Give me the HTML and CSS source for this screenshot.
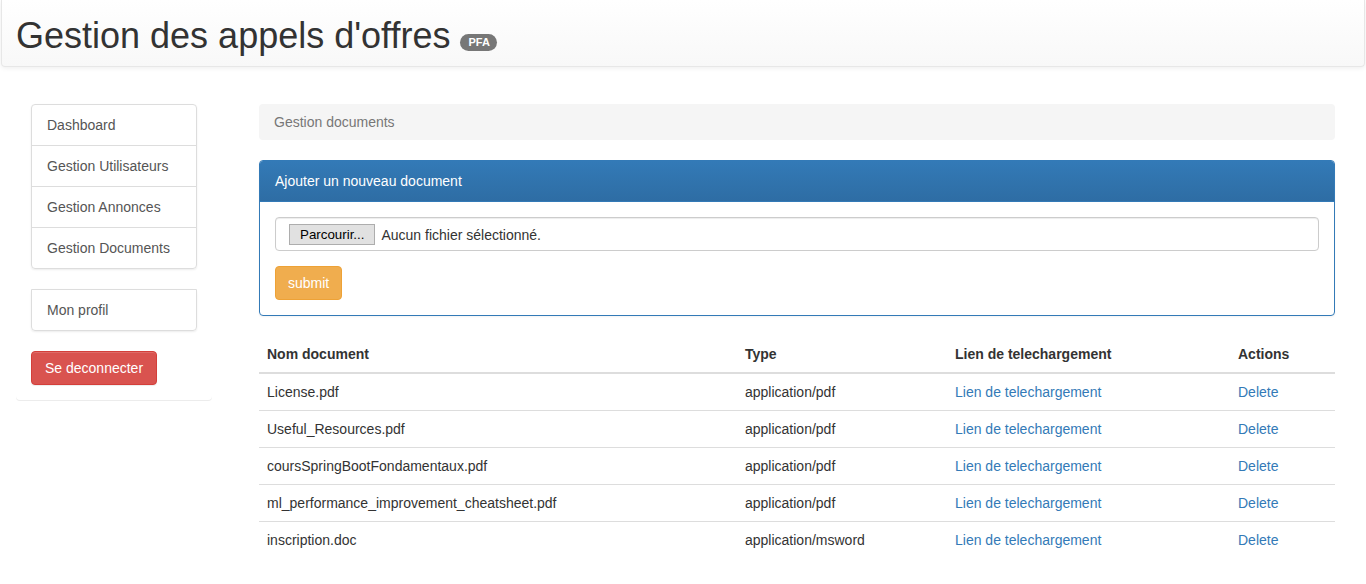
FILE: index.html
```html
<!DOCTYPE html>
<html lang="fr">
<head>
<meta charset="utf-8">
<title>Gestion des appels d'offres</title>
<link rel="stylesheet" href="styles.css">
</head>
<body>
<header class="topbar">
  <h1 class="title">Gestion des appels d'offres <span class="badge">PFA</span></h1>
</header>
<div class="layout">
  <aside class="sidebar">
    <ul class="list-group">
      <li class="list-item"><a href="#">Dashboard</a></li>
      <li class="list-item"><a href="#">Gestion Utilisateurs</a></li>
      <li class="list-item"><a href="#">Gestion Annonces</a></li>
      <li class="list-item"><a href="#">Gestion Documents</a></li>
    </ul>
    <ul class="list-group">
      <li class="list-item"><a href="#">Mon profil</a></li>
    </ul>
    <button class="btn btn-danger" type="button">Se deconnecter</button>
  </aside>
  <main class="main">
    <div class="breadcrumb">Gestion documents</div>
    <section class="panel">
      <div class="panel-heading">Ajouter un nouveau document</div>
      <div class="panel-body">
        <div class="file-control">
          <span class="file-btn">Parcourir...</span>
          <span class="file-name">Aucun fichier sélectionné.</span>
        </div>
        <button class="btn btn-warning" type="button">submit</button>
      </div>
    </section>
    <table class="table">
      <colgroup>
        <col class="c1"><col class="c2"><col class="c3"><col class="c4">
      </colgroup>
      <thead>
        <tr><th>Nom document</th><th>Type</th><th>Lien de telechargement</th><th>Actions</th></tr>
      </thead>
      <tbody>
        <tr><td>License.pdf</td><td>application/pdf</td><td><a href="#">Lien de telechargement</a></td><td><a href="#">Delete</a></td></tr>
        <tr><td>Useful_Resources.pdf</td><td>application/pdf</td><td><a href="#">Lien de telechargement</a></td><td><a href="#">Delete</a></td></tr>
        <tr><td>coursSpringBootFondamentaux.pdf</td><td>application/pdf</td><td><a href="#">Lien de telechargement</a></td><td><a href="#">Delete</a></td></tr>
        <tr><td>ml_performance_improvement_cheatsheet.pdf</td><td>application/pdf</td><td><a href="#">Lien de telechargement</a></td><td><a href="#">Delete</a></td></tr>
        <tr><td>inscription.doc</td><td>application/msword</td><td><a href="#">Lien de telechargement</a></td><td><a href="#">Delete</a></td></tr>
      </tbody>
    </table>
  </main>
</div>
</body>
</html>
```

FILE: styles.css
```css
* { box-sizing: border-box; }
html, body { margin: 0; padding: 0; }
body {
  font-family: "Liberation Sans", Arial, Helvetica, sans-serif;
  font-size: 14px;
  line-height: 20px;
  color: #333;
  background: #fff;
}
a { color: #337ab7; text-decoration: none; }

.topbar {
  height: 67px;
  margin: 0 1px;
  padding: 16px 14px 9px;
  border: 1px solid #e7e7e7;
  border-top: none;
  border-radius: 0 0 4px 4px;
  background: linear-gradient(to bottom, #fff 0, #f8f8f8 100%);
  box-shadow: 0 1px 5px rgba(0,0,0,.075);
}
.title {
  margin: 0;
  font-size: 36px;
  line-height: 40px;
  font-weight: 500;
  color: #333;
}
.badge {
  display: inline-block;
  vertical-align: baseline;
  padding: 3px 7px 3px 8px;
  font-size: 11px;
  line-height: 11px;
  font-weight: 700;
  color: #fff;
  background: #777;
  border-radius: 10px;
  position: relative;
  top: -2px;
}

.layout {
  display: flex;
  align-items: flex-start;
  gap: 47px;
  padding: 22px 31px 0 16px;
}
.sidebar {
  width: 196px;
  flex: none;
  padding: 15px;
  background: #fff;
  border-radius: 0 0 4px 4px;
  box-shadow: 0 1px 0 #ececec;
}
.list-group {
  list-style: none;
  margin: 0 0 20px;
  padding: 0;
  border-radius: 4px;
  box-shadow: 0 1px 2px rgba(0,0,0,.075);
}
.list-item {
  border: 1px solid #ddd;
  margin-bottom: -1px;
}
.list-item:first-child { border-radius: 4px 4px 0 0; }
.list-item:last-child { border-radius: 0 0 4px 4px; margin-bottom: 0; }
.list-item a {
  display: block;
  padding: 10px 15px;
  color: #555;
}

.btn {
  display: inline-block;
  font-family: inherit;
  font-size: 14px;
  line-height: 20px;
  padding: 6px 12px;
  border: 1px solid transparent;
  border-radius: 4px;
  color: #fff;
  cursor: pointer;
}
.btn-danger {
  padding: 6px 13px;
  background: #d9534f;
  border-color: #d43f3a;
  box-shadow: inset 0 1px 0 rgba(255,255,255,.15), 0 1px 1px rgba(0,0,0,.075);
}
.btn-warning {
  background: #f0ad4e;
  border-color: #eea236;
}

.main {
  flex: 1;
  margin-top: 15px;
  min-width: 0;
}
.breadcrumb {
  padding: 8px 15px;
  margin-bottom: 20px;
  background: #f5f5f5;
  border-radius: 4px;
  color: #777;
}
.panel {
  border: 1px solid #337ab7;
  border-radius: 4px;
  margin-bottom: 20px;
  box-shadow: 0 1px 2px rgba(0,0,0,.05);
}
.panel-heading {
  padding: 10px 15px;
  color: #fff;
  background: linear-gradient(to bottom, #337ab7 0, #2e6da4 100%);
  border-bottom: 1px solid #337ab7;
  border-radius: 3px 3px 0 0;
}
.panel-body { padding: 15px; }
.file-control {
  display: flex;
  align-items: center;
  height: 34px;
  padding: 0 12px 0 13px;
  margin-bottom: 15px;
  border: 1px solid #ccc;
  border-radius: 4px;
  box-shadow: inset 0 1px 1px rgba(0,0,0,.075);
}
.file-btn {
  display: inline-block;
  height: 21px;
  padding: 0 10px 0 10px;
  font-size: 13.33px;
  line-height: 19px;
  color: #000;
  background: #e1e1e1;
  border: 1px solid #adadad;
  margin-top: 1px;
}
.file-name {
  margin-left: 6px;
  font-size: 14px;
  color: #333;
  margin-top: 1px;
}

.table {
  width: 100%;
  border-collapse: collapse;
  border-spacing: 0;
  table-layout: fixed;
}
.c1 { width: 478px; }
.c2 { width: 210px; }
.c3 { width: 283px; }
.c4 { width: 105px; }
.table th, .table td {
  padding: 8px;
  text-align: left;
  vertical-align: top;
  white-space: nowrap;
}
.table th {
  font-weight: 700;
  border-bottom: 2px solid #ddd;
}
.table td { border-top: 1px solid #ddd; }
.table tbody tr:first-child td { border-top: none; }
```
